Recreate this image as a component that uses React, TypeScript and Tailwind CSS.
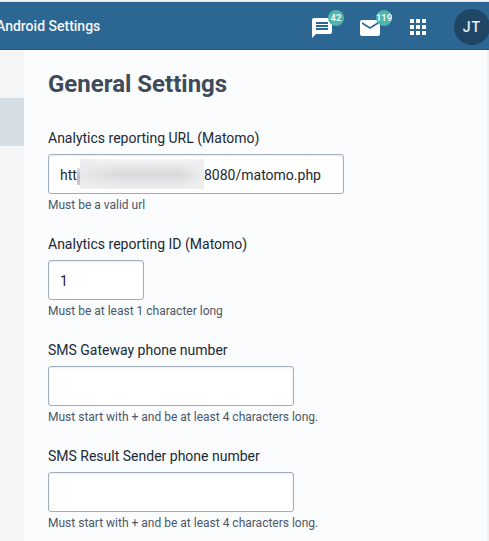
import React from "react";

function Badge({ count }: { count: string }) {
  return (
    <span className="absolute left-[18px] -top-[6px] flex h-4 min-w-4 items-center justify-center rounded-full bg-[#4db6ac] text-[9.5px] font-medium leading-4 text-white">
      <span className="-mx-1">{count}</span>
    </span>
  );
}

function HeaderIcon({ path, count }: { path: string; count?: string }) {
  return (
    <div className="relative h-6 w-6">
      <svg viewBox="0 0 24 24" className="h-6 w-6" fill="#fff">
        <path d={path} />
      </svg>
      {count && <Badge count={count} />}
    </div>
  );
}

type FieldProps = {
  label: string;
  help: string;
  width: string;
  children?: React.ReactNode;
};

function Field({ label, help, width, children }: FieldProps) {
  return (
    <div className="h-[106px]">
      <div className="h-[26px] text-[14px] leading-5 text-[#212934]">{label}</div>
      <div
        className={
          "flex h-10 items-center rounded-[3px] border border-[#a0adba] bg-white px-[11px] text-[14px] text-[#212934] shadow-[inset_0_1px_2px_0_rgba(48,54,60,0.1)] " +
          width
        }
      >
        {children}
      </div>
      <div className="pt-1 text-[12px] leading-[14px] text-[#4a5768]">{help}</div>
    </div>
  );
}

const message =
  "M20 2H4c-1.1 0-1.99.9-1.99 2L2 22l4-4h14c1.1 0 2-.9 2-2V4c0-1.1-.9-2-2-2zm-2 12H6v-2h12v2zm0-3H6V9h12v2zm0-3H6V6h12v2z";
const mail =
  "M20 4H4c-1.1 0-1.99.9-1.99 2L2 18c0 1.1.9 2 2 2h16c1.1 0 2-.9 2-2V6c0-1.1-.9-2-2-2zm0 4l-8 5-8-5V6l8 5 8-5v2z";
const apps =
  "M4 8h4V4H4v4zm6 12h4v-4h-4v4zm-6 0h4v-4H4v4zm0-6h4v-4H4v4zm6 0h4v-4h-4v4zm6-10v4h4V4h-4zm-6 4h4V4h-4v4zm6 6h4v-4h-4v4zm0 6h4v-4h-4v4z";

export default function App() {
  return (
    <div className="flex h-[541px] w-[489px] flex-col overflow-hidden bg-[#fbfcfd] font-['Roboto',sans-serif]">
      <div className="h-px shrink-0 bg-[#f4f4f4]" />
      <div className="h-px shrink-0 bg-[#dedede]" />
      <header className="flex h-12 shrink-0 items-center border-b border-[#255780] bg-[#2c6693]">
        <div className="-ml-[4px] w-[314px] shrink-0 pt-[2px] text-[14px] font-medium text-[#f4f6f8]">
          Android Settings
        </div>
        <div className="flex shrink-0 items-center gap-6 pt-[5px]">
          <HeaderIcon path={message} count="42" />
          <HeaderIcon path={mail} count="119" />
          <div className="-mt-[2px]">
            <HeaderIcon path={apps} />
          </div>
        </div>
        <div className="ml-6 mt-[2px] flex h-9 w-9 shrink-0 items-center justify-center rounded-full bg-[#1f4666] pt-px text-[14px] font-medium tracking-[1px] text-[#e8edf2]">
          JT
        </div>
      </header>
      <div className="flex min-h-0 flex-1">
        <aside className="w-6 shrink-0 bg-[#f3f5f7] pt-12">
          <div className="h-12 bg-[#d5dde5]" />
        </aside>
        <main className="flex-1 pl-6 pt-[18px]">
          <h1 className="h-[60px] text-[24px] font-bold leading-8 text-[#404b5a]">General Settings</h1>
          <Field label="Analytics reporting URL (Matomo)" help="Must be a valid url" width="w-[296px]">
            <span className="w-[17px] pt-[2px]">htt</span>
            <span className="mt-1 h-[17px] w-[3px] bg-linear-to-b from-[#dddee0] via-[#b9bcc2] to-[#c9cbd0]" />
            <span className="flex h-[30px] w-[124px] justify-between bg-linear-to-b from-[#f6f6f7] via-[#d8d9db] to-[#efeff0]">
              <span className="w-10 bg-linear-to-r from-[#ededef]/80 to-[#ededef]/0" />
              <span className="w-6 bg-linear-to-l from-[#f0f0f1]/90 to-[#f0f0f1]/0" />
            </span>
            <span className="pt-[2px]">8080/matomo.php</span>
          </Field>
          <Field label="Analytics reporting ID (Matomo)" help="Must be at least 1 character long" width="w-24">
            <span className="pt-[2px]">1</span>
          </Field>
          <Field
            label="SMS Gateway phone number"
            help="Must start with + and be at least 4 characters long."
            width="w-[246px]"
          />
          <Field
            label="SMS Result Sender phone number"
            help="Must start with + and be at least 4 characters long."
            width="w-[246px]"
          />
        </main>
        <div className="w-[2px] bg-[#f0f0f1]" />
      </div>
    </div>
  );
}
